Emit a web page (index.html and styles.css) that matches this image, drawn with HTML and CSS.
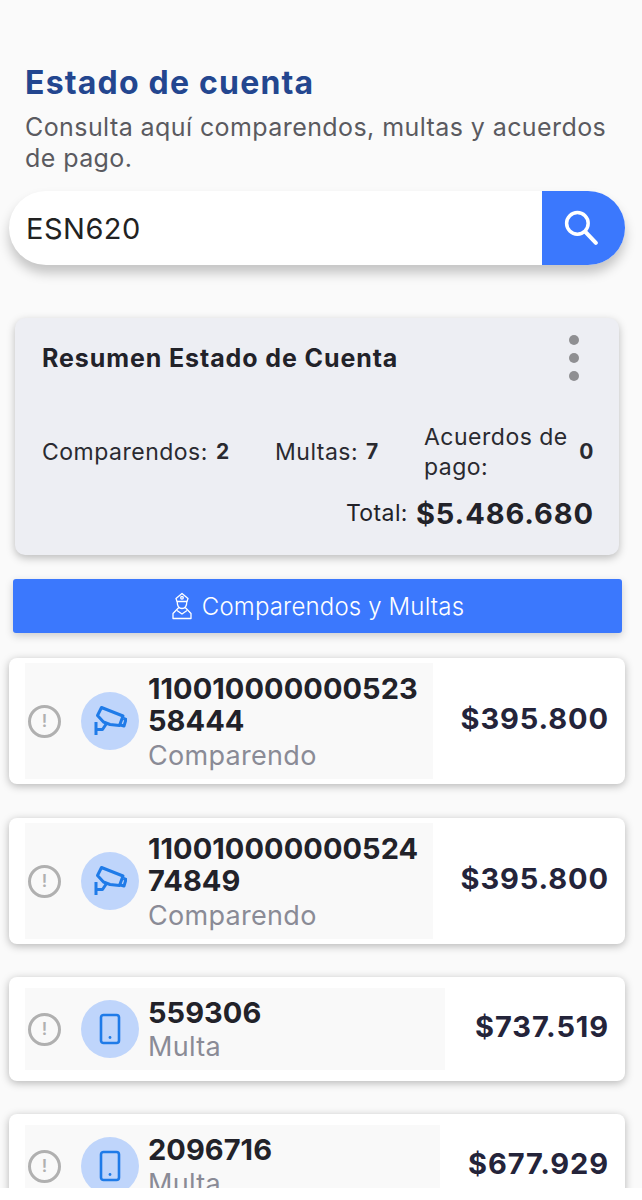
FILE: index.html
```html
<!DOCTYPE html>
<html lang="es">
<head>
<meta charset="utf-8">
<title>Estado de cuenta</title>
<link rel="stylesheet" href="styles.css">
</head>
<body>
<main class="page">
  <header class="head">
    <h1 class="title">Estado de cuenta</h1>
    <p class="subtitle">Consulta aquí comparendos, multas y acuerdos de pago.</p>
  </header>
  <div class="search">
    <div class="search-input">ESN620</div>
    <div class="search-btn">
      <svg width="39" height="39" viewBox="0 0 38 38" fill="none" stroke="#fff" stroke-width="3.400"><circle cx="15" cy="14" r="10.500"/><path d="M23 22.500 33 33" stroke-width="4" stroke-linecap="round"/></svg>
    </div>
  </div>
  <section class="summary">
    <div class="summary-top">
      <h2 class="summary-title">Resumen Estado de Cuenta</h2>
      <div class="dots"><i></i><i></i><i></i></div>
    </div>
    <div class="stats">
      <div class="stat s1"><span>Comparendos:</span><b>2</b></div>
      <div class="stat s2"><span>Multas:</span><b>7</b></div>
      <div class="stat s3"><span>Acuerdos de pago:</span><b>0</b></div>
    </div>
    <div class="total"><span>Total:</span><b>$5.486.680</b></div>
  </section>
  <div class="tab">
    <svg width="22" height="28" viewBox="0 0 22 28" fill="none" stroke="#fff" stroke-width="1.300" stroke-linejoin="round"><path d="M5 6.500 11 1.500l6 5-1 3H6z"/><circle cx="11" cy="5.800" r="1.300"/><path d="M6.200 9.500c0 4 1.800 7 4.800 7s4.800-3 4.800-7"/><path d="M7.800 15.500 2 21.500V26.500H20V21.500L14.200 15.500"/><path d="M6 18.500l5 3.500 5-3.500"/></svg>
    <span>Comparendos y Multas</span>
  </div>
  <ul class="list">
    <li class="row">
      <div class="info tall w408">
        <span class="alert">!</span>
        <span class="circle"><svg width="34" height="34" viewBox="0 0 34 34" fill="none" stroke="#1f7be8" stroke-width="3" stroke-linejoin="round"><path d="M8.500 3.500 30 12 26.500 21.500 17 20.500 10.500 18 4.500 11.500z"/><path d="M30.500 14.500 33 15.500 31 22 27.500 21"/><path d="M3 18V31M3 25.500H9.500L13.500 19.500"/></svg></span>
        <div class="ident"><strong>110010000000523 58444</strong><em>Comparendo</em></div>
      </div>
      <b class="amount">$395.800</b>
    </li>
    <li class="row">
      <div class="info tall w408">
        <span class="alert">!</span>
        <span class="circle"><svg width="34" height="34" viewBox="0 0 34 34" fill="none" stroke="#1f7be8" stroke-width="3" stroke-linejoin="round"><path d="M8.500 3.500 30 12 26.500 21.500 17 20.500 10.500 18 4.500 11.500z"/><path d="M30.500 14.500 33 15.500 31 22 27.500 21"/><path d="M3 18V31M3 25.500H9.500L13.500 19.500"/></svg></span>
        <div class="ident"><strong>110010000000524 74849</strong><em>Comparendo</em></div>
      </div>
      <b class="amount">$395.800</b>
    </li>
    <li class="row short">
      <div class="info w420">
        <span class="alert">!</span>
        <span class="circle"><svg width="22" height="32" viewBox="0 0 22 32" fill="none" stroke="#1f7be8" stroke-width="2.600"><rect x="2" y="2" width="18" height="28" rx="2.500"/><circle cx="11" cy="24.500" r="1.400" fill="#1f7be8" stroke="none"/></svg></span>
        <div class="ident"><strong>559306</strong><em>Multa</em></div>
      </div>
      <b class="amount">$737.519</b>
    </li>
    <li class="row short">
      <div class="info w415">
        <span class="alert">!</span>
        <span class="circle"><svg width="22" height="32" viewBox="0 0 22 32" fill="none" stroke="#1f7be8" stroke-width="2.600"><rect x="2" y="2" width="18" height="28" rx="2.500"/><circle cx="11" cy="24.500" r="1.400" fill="#1f7be8" stroke="none"/></svg></span>
        <div class="ident"><strong>2096716</strong><em>Multa</em></div>
      </div>
      <b class="amount">$677.929</b>
    </li>
  </ul>
</main>
</body>
</html>
```

FILE: styles.css
```css
* { box-sizing: border-box; }
html, body { margin: 0; padding: 0; background: #fff; }
body { font-family: Inter, "Liberation Sans", sans-serif; color: #222229; }
.page {
  height: 1188px;
  overflow: hidden;
  background: #fafafa;
  padding: 65px 17px 0 9px;
}
.head { padding-left: 16px; }
.title {
  margin: 0;
  font-size: 32px;
  line-height: 36px;
  font-weight: 700;
  letter-spacing: 1.2px;
  color: #23468f;
}
.subtitle {
  margin: 11px 0 0;
  font-size: 25px;
  line-height: 31px;
  letter-spacing: 0.42px;
  color: #5a5a60;
}
.search {
  margin-top: 17px;
  height: 74px;
  display: flex;
  border-radius: 37px;
  box-shadow: 0 8px 12px rgba(0, 0, 0, 0.22);
  background: #fff;
}
.search-input {
  flex: 1;
  display: flex;
  align-items: center;
  padding-left: 17px;
  font-size: 29px;
  letter-spacing: 0.5px;
  color: #222;
}
.search-btn {
  width: 83px;
  background: #3b78fd;
  border-radius: 0 37px 37px 0;
  display: flex;
  align-items: center;
  justify-content: center;
  padding-right: 4px;
}
.summary {
  margin: 53px 6px 0;
  height: 237px;
  border-radius: 10px;
  background: #edeef3;
  box-shadow: 0 3px 8px rgba(0, 0, 0, 0.25);
  padding: 0 25px 0 27px;
  display: flex;
  flex-direction: column;
}
.summary-top {
  display: flex;
  justify-content: space-between;
  align-items: flex-start;
  height: 104px;
  padding: 14px 15px 0 0;
}
.summary-title {
  margin: 10px 0 0;
  font-size: 25px;
  line-height: 32px;
  font-weight: 700;
  letter-spacing: 0.9px;
  color: #222229;
}
.dots { display: flex; flex-direction: column; gap: 8px; padding-top: 3px; }
.dots i { width: 10px; height: 10px; border-radius: 50%; background: #8f8f92; }
.stats {
  display: flex;
  align-items: center;
  height: 60px;
  font-size: 23px;
  line-height: 30px;
  letter-spacing: 0.5px;
  color: #2a2a30;
}
.stat { display: flex; align-items: center; gap: 8px; }
.stat b { font-size: 21px; font-weight: 700; }
.s1 { width: 233px; }
.s2 { width: 149px; }
.s3 { flex: 1; justify-content: space-between; gap: 0; }
.s3 span { width: 150px; }
.total {
  display: flex;
  justify-content: flex-end;
  align-items: center;
  gap: 8px;
  height: 46px;
  margin-top: 8px;
  font-size: 23px;
  letter-spacing: 0.4px;
}
.total b { font-size: 29px; letter-spacing: 0.9px; color: #222229; }
.tab {
  margin: 24px 3px 0 4px;
  height: 54px;
  border-radius: 3px;
  background: #3b78fd;
  box-shadow: 0 3px 8px rgba(0, 0, 0, 0.18);
  display: flex;
  align-items: center;
  justify-content: center;
  gap: 9px;
  color: #fff;
  font-size: 24px;
  font-weight: 300;
  letter-spacing: 0.15px;
}
.list { list-style: none; margin: 25px 0 0; padding: 0; display: flex; flex-direction: column; gap: 33px; }
.row {
  height: 126px;
  background: #fff;
  border-radius: 8px;
  box-shadow: 0 2px 8px rgba(0, 0, 0, 0.28);
  display: flex;
  align-items: center;
  padding: 0 16px 0 16px;
}
.row:first-child { margin-bottom: 1px; }
.row.short { height: 104px; }
.info {
  display: flex;
  align-items: center;
  height: 82px;
  background: #f9f9f9;
  margin-right: auto;
}
.info.tall { height: 116px; }
.w408 { width: 408px; }
.w420 { width: 420px; }
.w415 { width: 415px; }
.alert {
  flex: none;
  width: 33px;
  height: 33px;
  margin-left: 3px;
  border: 3px solid #b0b0b0;
  border-radius: 50%;
  color: #b0b0b0;
  font-size: 17px;
  font-weight: 600;
  display: flex;
  align-items: center;
  justify-content: center;
}
.circle {
  flex: none;
  width: 58px;
  height: 58px;
  margin-left: 20px;
  border-radius: 50%;
  background: #bfd5fb;
  display: flex;
  align-items: center;
  justify-content: center;
}
.ident { margin-left: 9px; padding-top: 2px; min-width: 0; flex: 1; display: flex; flex-direction: column; }
.ident strong {
  font-size: 29px;
  line-height: 32px;
  font-weight: 700;
  letter-spacing: 0.05px;
  color: #222229;
}
.ident em {
  font-style: normal;
  margin-top: 1px;
  font-size: 27px;
  line-height: 33px;
  letter-spacing: 0.3px;
  color: #8a8b96;
}
.tall .ident em { margin-top: 2px; }
.amount {
  padding-bottom: 5px;
  font-size: 29px;
  font-weight: 700;
  letter-spacing: 0.9px;
  color: #24243a;
  white-space: nowrap;
}
```
